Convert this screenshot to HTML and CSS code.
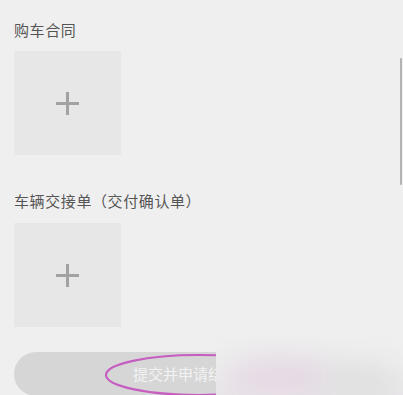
FILE: index.html
```html
<!DOCTYPE html>
<html lang="zh">
<head>
<meta charset="utf-8">
<link rel="stylesheet" href="styles.css">
</head>
<body>
<div class="page">
  <section class="group first">
    <div class="title">购车合同</div>
    <div class="upload"><span class="plus"></span></div>
  </section>
  <div class="divider"></div>
  <section class="group second">
    <div class="title">车辆交接单（交付确认单）</div>
    <div class="upload"><span class="plus"></span></div>
  </section>
  <div class="btn-wrap">
    <div class="btn">提交并申请结清</div>
  </div>
  <div class="scrollbar"></div>
  <svg class="ellipse" width="200" height="46" viewBox="0 0 200 46"><ellipse cx="100" cy="23" rx="92" ry="20" fill="none" stroke="#c65ec2" stroke-width="2.2"/></svg>
  <div class="blur"><div class="blob b1"></div><div class="blob b2"></div></div>
</div>
</body>
</html>
```
FILE: styles.css
```css
html, body {
  margin: 0;
  padding: 0;
  background: #efefef;
  overflow: hidden;
}
.page {
  position: relative;
  width: 403px;
  height: 395px;
  font-family: "Noto Sans CJK SC", "Noto Sans", sans-serif;
  display: flex;
  flex-direction: column;
}
.group {
  display: flex;
  flex-direction: column;
  gap: 11px;
  padding-left: 14px;
}
.first {
  padding-top: 20px;
  padding-bottom: 19px;
}
.second {
  padding-top: 17px;
  gap: 12px;
}
.title {
  font-size: 15px;
  line-height: 20px;
  color: #555555;
  letter-spacing: 0.6px;
}
.upload {
  width: 107px;
  height: 104px;
  background: #e7e7e8;
  display: flex;
  align-items: center;
  justify-content: center;
}
.plus {
  position: relative;
  width: 23px;
  height: 23px;
}
.plus::before, .plus::after {
  content: "";
  position: absolute;
  background: #a2a2a2;
}
.plus::before {
  left: 0; right: 0; top: 10px; height: 3px;
}
.plus::after {
  top: 0; bottom: 0; left: 10px; width: 3px;
}
.divider {
  height: 1px;
  margin-left: 15px;
  background: #e2e2e2;
}
.btn-wrap {
  padding: 25px 14px 0 14px;
}
.btn {
  height: 44px;
  border-radius: 22px;
  background: #d6d6d6;
  color: #f3f3f3;
  font-size: 15px;
  line-height: 44px;
  padding-left: 119px;
  white-space: nowrap;
  overflow: hidden;
}
.scrollbar {
  position: absolute;
  left: 400px;
  top: 58px;
  width: 2px;
  height: 127px;
  background: #b4b4b4;
  border-radius: 1px;
}
.ellipse {
  position: absolute;
  left: 98px;
  top: 352px;
}
.blur {
  position: absolute;
  left: 216px;
  top: 334px;
  right: 0;
  bottom: 0;
  background: linear-gradient(180deg, #efefef 0%, #ededed 50%, #e8e6e8 100%);
  overflow: hidden;
}
.blob {
  position: absolute;
  border-radius: 50%;
  filter: blur(12px);
}
.b1 {
  left: 10px;
  top: 22px;
  width: 110px;
  height: 44px;
  background: #e6dae5;
}
.b2 {
  left: 100px;
  top: 30px;
  width: 80px;
  height: 36px;
  background: #e0e0e0;
}
```
